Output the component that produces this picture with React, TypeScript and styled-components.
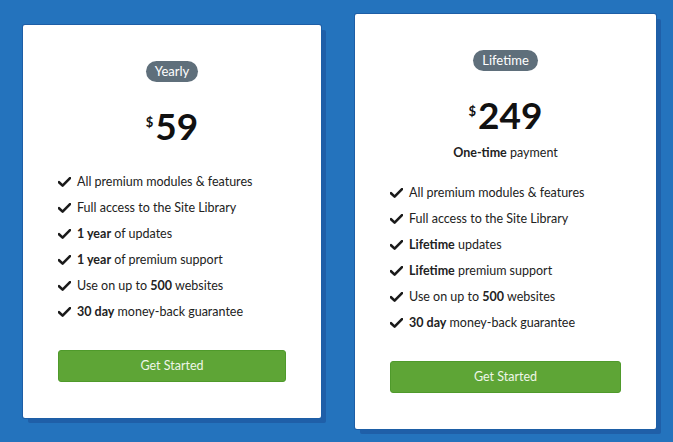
import React from "react";
import styled, { createGlobalStyle } from "styled-components";

type Feature = { strong?: string; before?: string; after?: string };

type Plan = {
  label: string;
  price: string;
  subtitle?: { strong: string; rest: string };
  features: Feature[];
};

const plans: Plan[] = [
  {
    label: "Yearly",
    price: "59",
    features: [
      { before: "All premium modules & features" },
      { before: "Full access to the Site Library" },
      { strong: "1 year", after: " of updates" },
      { strong: "1 year", after: " of premium support" },
      { before: "Use on up to ", strong: "500", after: " websites" },
      { strong: "30 day", after: " money-back guarantee" },
    ],
  },
  {
    label: "Lifetime",
    price: "249",
    subtitle: { strong: "One-time", rest: " payment" },
    features: [
      { before: "All premium modules & features" },
      { before: "Full access to the Site Library" },
      { strong: "Lifetime", after: " updates" },
      { strong: "Lifetime", after: " premium support" },
      { before: "Use on up to ", strong: "500", after: " websites" },
      { strong: "30 day", after: " money-back guarantee" },
    ],
  },
];

const CheckIcon = () => (
  <svg width="13" height="10" viewBox="0 0 13 10" aria-hidden="true">
    <path
      d="M1 5.2 L4.6 8.6 L12 1.2"
      fill="none"
      stroke="#1a1a1a"
      strokeWidth="2.6"
      strokeLinecap="round"
      strokeLinejoin="round"
    />
  </svg>
);

export default function App() {
  return (
    <>
      <GlobalStyle />
      <Page>
        {plans.map((plan) => (
          <Card key={plan.label} $width={plan.subtitle ? 301 : 298}>
            <Badge>{plan.label}</Badge>
            <Price>
              <Currency>$</Currency>
              {plan.price}
            </Price>
            {plan.subtitle && (
              <Subtitle>
                <b>{plan.subtitle.strong}</b>
                {plan.subtitle.rest}
              </Subtitle>
            )}
            <FeatureList>
              {plan.features.map((f, i) => (
                <FeatureRow key={i}>
                  <CheckIcon />
                  <span>
                    {f.before}
                    {f.strong && <b>{f.strong}</b>}
                    {f.after}
                  </span>
                </FeatureRow>
              ))}
            </FeatureList>
            <Button>Get Started</Button>
          </Card>
        ))}
      </Page>
    </>
  );
}

const GlobalStyle = createGlobalStyle`
  html, body {
    margin: 0;
    padding: 0;
    background: #2473bd;
  }
  body {
    font-family: Lato, "Open Sans", sans-serif;
    color: #222;
  }
`;

const Page = styled.div`
  align-items: center;
  background: #2473bd;
  box-sizing: border-box;
  display: flex;
  gap: 34px;
  height: 442px;
  padding-left: 23px;
  width: 673px;
`;

const Card = styled.div<{ $width: number }>`
  align-items: center;
  background: #fff;
  border-radius: 2px;
  box-shadow: 0 0 0 1px #1d5ea6, 5px 5px 0 #1f5fa8;
  box-sizing: border-box;
  display: flex;
  flex-direction: column;
  padding: 36px 35px 36px;
  width: ${({ $width }) => $width}px;
`;

const Badge = styled.div`
  background: #5f6f7b;
  border-radius: 11px;
  color: #fff;
  font-size: 13px;
  height: 21px;
  line-height: 21px;
  padding: 0 9px;
`;

const Price = styled.div`
  color: #111;
  display: flex;
  font-size: 37px;
  font-weight: 700;
  line-height: 44px;
  margin: 22px 0 21px;
`;

const Currency = styled.span`
  font-size: 13px;
  font-weight: 700;
  line-height: 13px;
  margin: 12px 2px 0 0;
`;

const Subtitle = styled.div`
  font-size: 12.5px;
  line-height: 22px;
  margin: -16px 0 16px;

  b {
    font-weight: 700;
  }
`;

const FeatureList = styled.div`
  align-self: stretch;
  display: flex;
  flex-direction: column;
`;

const FeatureRow = styled.div`
  align-items: center;
  display: flex;
  font-size: 12.5px;
  gap: 6px;
  height: 26px;

  b {
    font-weight: 700;
  }
`;

const Button = styled.button`
  align-self: stretch;
  background: #5ea536;
  border: 1px solid #4f9a2b;
  border-radius: 3px;
  color: #eef6e8;
  cursor: pointer;
  font-family: Lato, "Open Sans", sans-serif;
  font-size: 12.5px;
  font-weight: 400;
  height: 32px;
  margin-top: 25px;
`;
